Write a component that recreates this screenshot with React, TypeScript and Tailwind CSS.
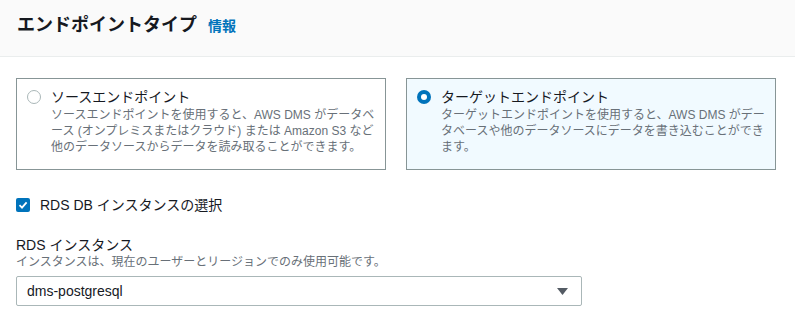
import React from "react";

const font = { fontFamily: '"Liberation Sans", "Noto Sans CJK JP", sans-serif' };

function Radio({ checked }: { checked: boolean }) {
  return checked ? (
    <span className="mt-[3px] flex h-[14px] w-[14px] shrink-0 items-center justify-center rounded-full bg-[#0073bb]">
      <span className="h-[6px] w-[6px] rounded-full bg-white" />
    </span>
  ) : (
    <span className="mt-[3px] h-[14px] w-[14px] shrink-0 rounded-full border border-[#aab7b8] bg-white" />
  );
}

function Tile({
  checked,
  title,
  lines,
}: {
  checked: boolean;
  title: string;
  lines: string[];
}) {
  return (
    <div
      className={`flex h-[92px] w-[370px] gap-[10px] border border-[#879596] pl-[10px] pt-[8px] ${
        checked ? "bg-[#f1faff]" : "bg-white"
      }`}
    >
      <Radio checked={checked} />
      <div className="flex flex-col">
        <div className="whitespace-nowrap text-[14px] leading-[20px] text-[#16191f]">{title}</div>
        <div className="whitespace-nowrap text-[12px] leading-[16px] text-[#687078]">
          {lines.map((l, i) => (
            <div key={i}>{l}</div>
          ))}
        </div>
      </div>
    </div>
  );
}

export default function App() {
  return (
    <div className="h-[323px] w-[795px] overflow-hidden bg-white" style={font}>
      <div className="flex h-[57px] items-start gap-[11px] border-b border-[#eaeded] bg-[#fafafa] pl-[17px] pt-[13px]">
        <span className="text-[18px] font-bold leading-[24px] text-[#16191f]">エンドポイントタイプ</span>
        <span className="pt-[3px] text-[14px] font-bold leading-[20px] text-[#0073bb]">情報</span>
      </div>
      <div className="pl-[16px] pt-[21px]">
        <div className="flex gap-[20px]">
          <Tile
            checked={false}
            title="ソースエンドポイント"
            lines={[
              "ソースエンドポイントを使用すると、AWS DMS がデータベ",
              "ース (オンプレミスまたはクラウド) または Amazon S3 など",
              "他のデータソースからデータを読み取ることができます。",
            ]}
          />
          <Tile
            checked={true}
            title="ターゲットエンドポイント"
            lines={[
              "ターゲットエンドポイントを使用すると、AWS DMS がデー",
              "タベースや他のデータソースにデータを書き込むことができ",
              "ます。",
            ]}
          />
        </div>
        <div className="mt-[25px] flex items-center gap-[10px]">
          <span className="flex h-[14px] w-[14px] items-center justify-center rounded-[2px] bg-[#0073bb]">
            <svg width="10" height="10" viewBox="0 0 10 10">
              <path d="M1.5 5.2 L4 7.6 L8.6 2.4" fill="none" stroke="white" strokeWidth="1.8" />
            </svg>
          </span>
          <span className="text-[14px] leading-[20px] text-[#16191f]">RDS DB インスタンスの選択</span>
        </div>
        <div className="mt-[21px] text-[14px] leading-[18px] text-[#16191f]">RDS インスタンス</div>
        <div className="text-[12px] leading-[16px] text-[#687078]">
          インスタンスは、現在のユーザーとリージョンでのみ使用可能です。
        </div>
        <div className="mt-[6px] flex h-[30px] w-[566px] items-center justify-between rounded-[2px] border border-[#aab7b8] bg-white pl-[10px] pr-[13px]">
          <span className="text-[14px] leading-[20px] text-[#16191f]">dms-postgresql</span>
          <svg width="11" height="7" viewBox="0 0 11 7">
            <path d="M0 0 H11 L5.5 7 Z" fill="#545b64" />
          </svg>
        </div>
      </div>
    </div>
  );
}
